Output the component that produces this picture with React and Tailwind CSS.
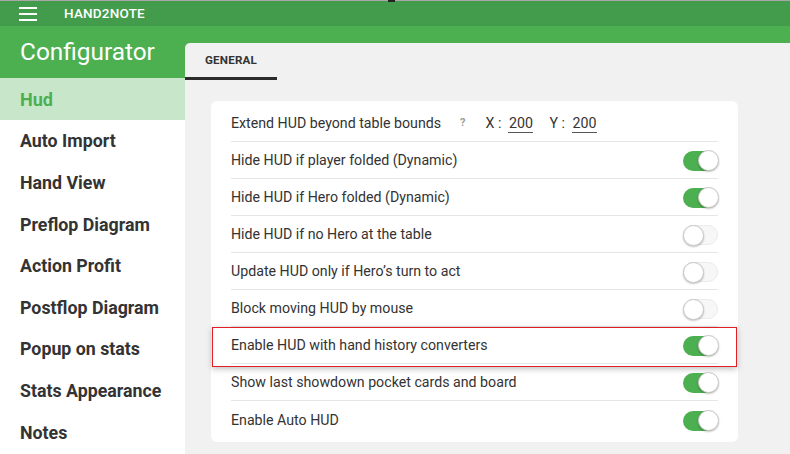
import React from 'react';

const menu = [
  'Auto Import',
  'Hand View',
  'Preflop Diagram',
  'Action Profit',
  'Postflop Diagram',
  'Popup on stats',
  'Stats Appearance',
  'Notes',
];

const rows = [
  { label: 'Hide HUD if player folded (Dynamic)', on: true },
  { label: 'Hide HUD if Hero folded (Dynamic)', on: true },
  { label: 'Hide HUD if no Hero at the table', on: false },
  { label: 'Update HUD only if Hero’s turn to act', on: false },
  { label: 'Block moving HUD by mouse', on: false },
  { label: 'Enable HUD with hand history converters', on: true, marked: true },
  { label: 'Show last showdown pocket cards and board', on: true },
  { label: 'Enable Auto HUD', on: true, last: true },
];

const Toggle = ({ on }) => (
  <div
    className={`relative w-[35px] h-[20px] rounded-full ${
      on ? 'bg-[#4caf50]' : 'bg-[#f7f7f7] border border-[#ececec]'
    }`}
  >
    <div
      className={`absolute top-[-1px] w-[21px] h-[21px] rounded-full bg-white border border-[#c9c9c9] shadow-[0_1px_2px_rgba(0,0,0,0.25)] ${
        on ? 'right-[-1px]' : 'left-[-1px]'
      }`}
    />
  </div>
);

const Row = ({ label, on, marked, last }) => (
  <div className="relative h-[37px]">
    {marked && (
      <div className="absolute left-[-19px] right-[-19px] top-0 bottom-[-3px] bg-white border border-[#e31e24] shadow-[0_2px_6px_rgba(0,0,0,0.25)]" />
    )}
    <div
      className={`relative h-full flex items-center justify-between pt-[2px] ${
        last ? '' : 'border-b border-[#e6e6e6]'
      }`}
    >
      <span className="text-[14.2px] text-[#333]">{label}</span>
      <Toggle on={on} />
    </div>
  </div>
);

export default function App() {
  return (
    <div
      className="relative w-[790px] h-[454px] overflow-hidden bg-[#f1f1f1] flex flex-col"
      style={{ fontFamily: 'Roboto, "Noto Sans", sans-serif' }}
    >
      <div className="h-px bg-[#a8a8a8]" />
      <div className="absolute top-0 left-[388px] w-[7px] h-[2px] bg-[#222]" />

      {/* title bar */}
      <div className="h-[25px] bg-[#439c4c] flex items-center">
        <div className="ml-[19px] w-[18px] flex flex-col gap-[4px]">
          <div className="h-[2px] bg-white" />
          <div className="h-[2px] bg-white" />
          <div className="h-[2px] bg-white" />
        </div>
        <span className="ml-[27px] text-white text-[13.5px] font-medium tracking-[0.2px]">HAND2NOTE</span>
      </div>

      <div className="flex flex-1">
        {/* sidebar */}
        <div className="w-[185px] bg-white flex flex-col">
          <div className="h-[52px] bg-[#4caf50] flex items-center pl-[20px]">
            <span className="text-white text-[24.4px]">Configurator</span>
          </div>
          <div className="h-[42px] bg-[#c8e6c9] flex items-center pl-[20px]">
            <span className="text-[#4caf50] text-[18px] font-bold">Hud</span>
          </div>
          {menu.map((m) => (
            <div key={m} className="h-[41.6px] flex items-center pl-[20px] pt-[2px]">
              <span className="text-[#333] text-[17.8px] font-bold">{m}</span>
            </div>
          ))}
        </div>

        {/* content */}
        <div className="flex-1 bg-[#4caf50] flex flex-col">
          <div className="mt-[17px] flex-1 bg-[#f1f1f1] rounded-tl-[5px] flex flex-col">
            <div className="h-[37px] flex">
              <div className="w-[92px] border-b-[3px] border-[#2b2b2b] flex items-center pl-[20px] pt-[2px]">
                <span className="text-[11.6px] font-bold text-[#333] tracking-[0.2px]">GENERAL</span>
              </div>
            </div>
            <div className="mt-[21px] ml-[26px] w-[527px] bg-white rounded-[6px] px-[20px] py-[4px]">
              <div className="h-[37px] flex items-center border-b border-[#e6e6e6] pt-[1px]">
                <span className="text-[14.2px] text-[#333]">Extend HUD beyond table bounds</span>
                <span className="ml-[19px] text-[11px] font-bold text-[#999]">?</span>
                <span className="ml-[20px] text-[14.2px] text-[#333]">X :</span>
                <span className="ml-[7px] w-[25px] text-center text-[14.2px] text-[#333] border-b border-[#555] leading-[18px]">200</span>
                <span className="ml-[16px] text-[14.2px] text-[#333]">Y :</span>
                <span className="ml-[7px] w-[25px] text-center text-[14.2px] text-[#333] border-b border-[#555] leading-[18px]">200</span>
              </div>
              {rows.map((r) => (
                <Row key={r.label} {...r} />
              ))}
            </div>
          </div>
        </div>
      </div>
    </div>
  );
}
